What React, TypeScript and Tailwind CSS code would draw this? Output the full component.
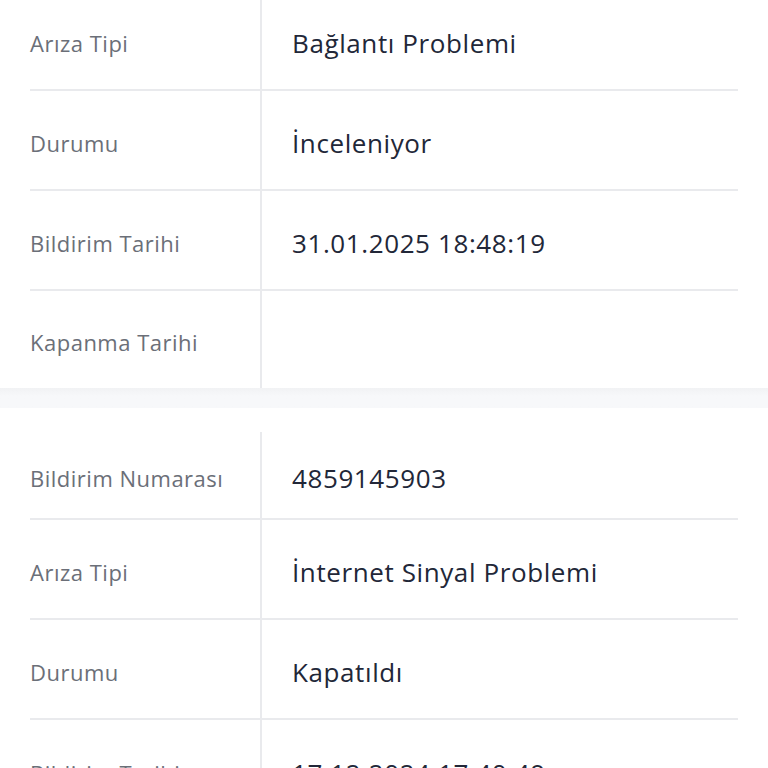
import React from "react";

type Row = { label: string; value: string };

const cards: Row[][] = [
  [
    { label: "Arıza Tipi", value: "Bağlantı Problemi" },
    { label: "Durumu", value: "İnceleniyor" },
    { label: "Bildirim Tarihi", value: "31.01.2025 18:48:19" },
    { label: "Kapanma Tarihi", value: "" },
  ],
  [
    { label: "Bildirim Numarası", value: "4859145903" },
    { label: "Arıza Tipi", value: "İnternet Sinyal Problemi" },
    { label: "Durumu", value: "Kapatıldı" },
    { label: "Bildirim Tarihi", value: "17.12.2024 17:40:49" },
  ],
];

function rowHeight(first: boolean | undefined, i: number, count: number) {
  if (!first && i === 0) return "h-[88px]";
  if (first && i === count - 1) return "h-[97px]";
  return "h-[100px]";
}

function InfoCard({ rows, first }: { rows: Row[]; first?: boolean }) {
  return (
    <div className={first ? "bg-white px-[30px] -mt-[9px]" : "bg-white px-[30px] pt-[24px]"}>
      {rows.map((r, i) => (
        <div
          key={i}
          className={
            "flex " +
            (i < rows.length - 1 ? "border-b-2 border-[#e9eaed] " : "") +
            rowHeight(first, i, rows.length)
          }
        >
          <div className="w-[230px] shrink-0 flex items-center pt-[6px] text-[22px] tracking-[0.5px] text-[#6b6f78]">
            {r.label}
          </div>
          <div className="flex-1 flex items-center pt-[6px] border-l-2 border-[#e9eaed] pl-[30px] text-[26px] tracking-[0.6px] text-[#222738]">
            {r.value}
          </div>
        </div>
      ))}
    </div>
  );
}

export default function App() {
  return (
    <div
      className="w-[768px] h-[768px] overflow-hidden bg-white"
      style={{ fontFamily: "'Open Sans', 'Noto Sans', sans-serif" }}
    >
      <InfoCard rows={cards[0]} first />
      <div className="h-[20px] bg-gradient-to-b from-[#f1f2f4] to-[#f7f8fa] to-40%" />
      <InfoCard rows={cards[1]} />
    </div>
  );
}
